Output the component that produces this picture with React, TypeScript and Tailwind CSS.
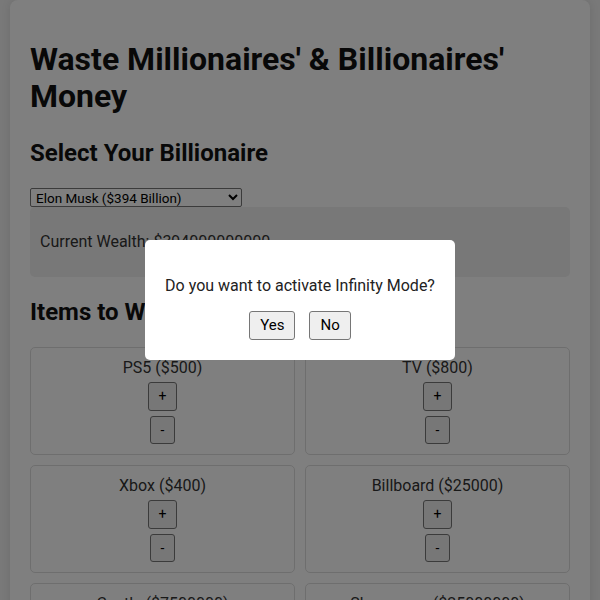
import { useState } from "react"

const billionaires = [
  { name: "Elon Musk", wealth: 394000000000, label: "Elon Musk ($394 Billion)" },
  { name: "Jeff Bezos", wealth: 190000000000, label: "Jeff Bezos ($190 Billion)" },
  { name: "Bernard Arnault", wealth: 180000000000, label: "Bernard Arnault ($180 Billion)" },
]

const items = [
  { name: "PS5", price: 500 },
  { name: "TV", price: 800 },
  { name: "Xbox", price: 400 },
  { name: "Billboard", price: 25000 },
  { name: "Castle", price: 7500000 },
  { name: "Skyscraper", price: 25000000 },
]

const btn =
  "block mx-auto mt-[5px] px-[10px] py-[5px] text-[14px] bg-[#efefef] border border-[#767676] rounded-[3px] text-black"

export default function App() {
  const [selected, setSelected] = useState(0)
  const [showModal, setShowModal] = useState(true)
  const wealth = billionaires[selected].wealth

  return (
    <div className="min-h-screen bg-[#f2f2f2] px-[10px] font-['Roboto',sans-serif] text-[#333]">
      <div className="bg-white rounded-[8px] shadow-[0_0_10px_rgba(0,0,0,0.1)] px-[20px] pt-[20px] pb-[20px]">
        <h1 className="text-[32px] font-bold leading-[37px] text-[#111] mt-[21px] mb-[24px]">
          Waste Millionaires' &amp; Billionaires' Money
        </h1>
        <h2 className="text-[24px] font-bold leading-[28px] text-[#111] mb-[21px]">
          Select Your Billionaire
        </h2>
        <select
          value={selected}
          onChange={(e) => setSelected(Number(e.target.value))}
          className="block h-[19px] w-[212px] text-[13.5px] leading-[15px] border border-[#767676] rounded-[2px] bg-white text-black pl-[1px]"
        >
          {billionaires.map((b, i) => (
            <option key={b.name} value={i}>
              {b.label}
            </option>
          ))}
        </select>
        <div className="bg-[#f0f0f0] rounded-[5px] p-[10px]">
          <p className="my-[16px] text-[16px] leading-[18px]">Current Wealth: ${wealth}</p>
        </div>
        <h2 className="text-[24px] font-bold leading-[28px] text-[#111] mt-[21px] mb-[21px]">
          Items to Waste
        </h2>
        <div className="grid grid-cols-2 gap-[10px]">
          {items.map((item) => (
            <div
              key={item.name}
              className="border border-[#ddd] rounded-[5px] p-[10px] text-center"
            >
              <p className="text-[16px] leading-[19px]">
                {item.name} (${item.price})
              </p>
              <button className={btn + " leading-[17px]"}>+</button>
              <button className={btn + " leading-[16px]"}>-</button>
            </div>
          ))}
        </div>
      </div>

      {showModal && (
        <div className="fixed inset-0 bg-black/50 flex items-center justify-center">
          <div className="bg-white rounded-[5px] p-[20px] text-center">
            <p className="my-[16px] text-[16px] leading-[19px] text-[#222]">
              Do you want to activate Infinity Mode?
            </p>
            <div className="flex justify-center gap-[14px]">
              <button
                onClick={() => setShowModal(false)}
                className="px-[10px] py-[5px] text-[15px] leading-[17px] bg-[#efefef] border border-[#767676] rounded-[3px] text-black"
              >
                Yes
              </button>
              <button
                onClick={() => setShowModal(false)}
                className="px-[10px] py-[5px] text-[15px] leading-[17px] bg-[#efefef] border border-[#767676] rounded-[3px] text-black"
              >
                No
              </button>
            </div>
          </div>
        </div>
      )}
    </div>
  )
}
